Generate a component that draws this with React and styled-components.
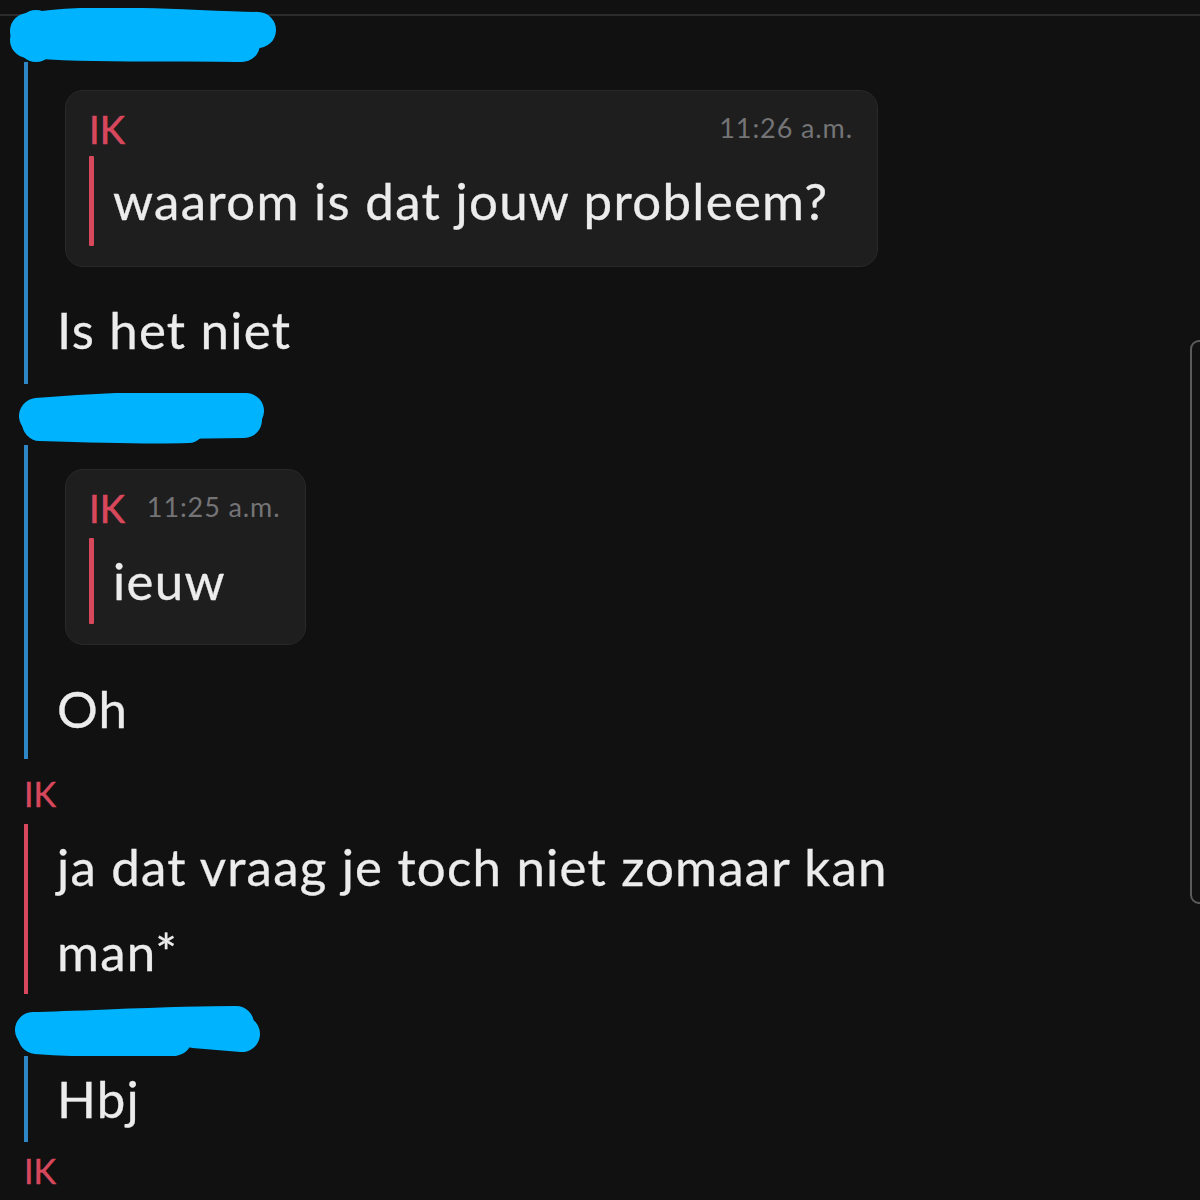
import React from "react";
import styled, { createGlobalStyle } from "styled-components";

const GlobalStyle = createGlobalStyle`
  html, body {
    margin: 0;
    padding: 0;
    background: #111112;
  }
  body {
    font-family: Lato, "Open Sans", sans-serif;
    color: #ececec;
    overflow: hidden;
  }
`;

const Screen = styled.div`
  position: relative;
  width: 1200px;
  height: 1200px;
  overflow: hidden;
  background: #111112;
`;

const TopRule = styled.div`
  margin-top: 14px;
  height: 2px;
  background: #2c2c2e;
`;

const Redacted = styled.svg`
  display: block;
  margin-top: ${p => p.$top}px;
  margin-left: ${p => p.$left}px;
  position: relative;
`;

const Sender = styled.div`
  margin-top: ${p => p.$top}px;
  margin-left: 24px;
  font-size: 34px;
  line-height: 40px;
  color: #d8485d;
  -webkit-text-stroke: 0.4px #d8485d;
`;

const Thread = styled.div`
  display: flex;
  flex-direction: column;
  align-items: flex-start;
  margin-top: ${p => p.$top || 0}px;
  margin-left: 24px;
  border-left: 4px solid ${p => (p.$me ? "#d8485d" : "#2f86c6")};
  padding: ${p => p.$pad || "0 0 0 29px"};
  min-height: ${p => p.$minHeight || 0}px;
`;

const Body = styled.div`
  font-size: 51px;
  line-height: ${p => p.$lh || 60}px;
  letter-spacing: 1.2px;
  -webkit-text-stroke: 0.3px #ececec;
  margin-top: ${p => p.$top || 0}px;
  white-space: ${p => (p.$nowrap ? "nowrap" : "normal")};
`;

const QuoteCard = styled.div`
  margin-left: 8px;
  margin-top: ${p => p.$top}px;
  min-width: ${p => p.$minWidth || 0}px;
  box-sizing: border-box;
  padding: 16px 24px 20px 23px;
  background: #1e1e1f;
  border: 1px solid #29292b;
  border-radius: 18px;
`;

const QuoteHead = styled.div`
  display: flex;
  align-items: center;
  justify-content: ${p => (p.$spread ? "space-between" : "flex-start")};
  gap: 22px;
  height: 44px;
`;

const QuoteName = styled.span`
  font-size: 38px;
  color: #d8485d;
  -webkit-text-stroke: 0.6px #d8485d;
`;

const Stamp = styled.span`
  font-size: 27px;
  color: #747476;
  letter-spacing: 0.9px;
  margin-top: -4px;
`;

const QuoteRow = styled.div`
  display: flex;
  margin-top: ${p => p.$top}px;
  height: ${p => p.$h}px;
`;

const QuoteBar = styled.div`
  width: 5px;
  background: #d8485d;
  border-radius: 1px;
  margin-right: 19px;
`;

const QuoteText = styled.div`
  font-size: 51px;
  letter-spacing: 1.3px;
  -webkit-text-stroke: 0.3px #ececec;
  line-height: ${p => p.$h}px;
  white-space: nowrap;
`;

const Scrollbar = styled.div`
  position: absolute;
  top: 340px;
  right: -8px;
  width: 14px;
  height: 560px;
  border: 2px solid #5b5b5d;
  border-radius: 9px;
`;

function Scribble({ top, left, variant }) {
  const shapes = {
    a: (
      <>
        <path d="M20 23 C 80 13, 150 19, 250 22" />
        <path d="M20 32 C 90 38, 170 34, 234 36" />
        <path d="M28 20 L 28 36" />
      </>
    ),
    b: (
      <>
        <path d="M19 23 C 90 17, 160 15, 228 18" />
        <path d="M22 30 C 80 32, 140 33, 170 32" />
        <path d="M150 28 L 226 27" />
      </>
    ),
    c: (
      <>
        <path d="M19 26 C 90 24, 160 20, 222 20" />
        <path d="M22 32 C 80 36, 140 36, 160 34" />
        <path d="M180 26 L 228 30" />
      </>
    ),
  };
  const size = { a: [272, 54], b: [248, 52], c: [250, 52] }[variant];
  return (
    <Redacted $top={top} $left={left} width={size[0]} height={size[1]} viewBox={`0 0 ${size[0]} ${size[1]}`}>
      <g fill="none" stroke="#00b3ff" strokeWidth="36" strokeLinecap="round" strokeLinejoin="round">
        {shapes[variant]}
      </g>
    </Redacted>
  );
}

export default function App() {
  return (
    <Screen>
      <GlobalStyle />
      <TopRule />

      <Scribble top={-8} left={8} variant="a" />
      <Thread $pad="28px 0 24px 29px">
        <QuoteCard $top={0} $minWidth={813}>
          <QuoteHead $spread>
            <QuoteName>IK</QuoteName>
            <Stamp>11:26 a.m.</Stamp>
          </QuoteHead>
          <QuoteRow $top={5} $h={90}>
            <QuoteBar />
            <QuoteText $h={90}>waarom is dat jouw probleem?</QuoteText>
          </QuoteRow>
        </QuoteCard>
        <Body $top={33}>Is het niet</Body>
      </Thread>

      <Scribble top={9} left={18} variant="b" />
      <Thread $pad="24px 0 20px 29px">
        <QuoteCard $top={0}>
          <QuoteHead>
            <QuoteName>IK</QuoteName>
            <Stamp>11:25 a.m.</Stamp>
          </QuoteHead>
          <QuoteRow $top={8} $h={86}>
            <QuoteBar />
            <QuoteText $h={86}>ieuw</QuoteText>
          </QuoteRow>
        </QuoteCard>
        <Body $top={34}>Oh</Body>
      </Thread>

      <Sender $top={15}>IK</Sender>
      <Thread $me $top={10}>
        <Body $lh={85} $nowrap>ja dat vraag je toch niet zomaar kan</Body>
        <Body $lh={85}>man*</Body>
      </Thread>

      <Scribble top={10} left={14} variant="c" />
      <Thread $pad="13px 0 13px 29px">
        <Body>Hbj</Body>
      </Thread>

      <Sender $top={9}>IK</Sender>
      <Thread $me $top={10} $minHeight={40} />

      <Scrollbar />
    </Screen>
  );
}
